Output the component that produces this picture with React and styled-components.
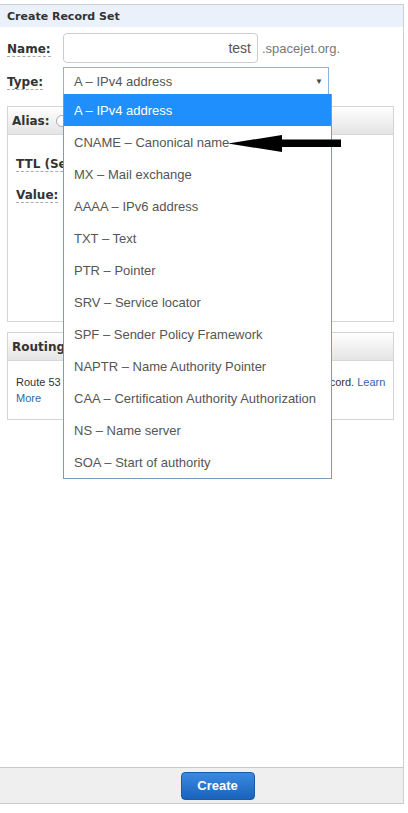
import React from "react";
import styled, { createGlobalStyle } from "styled-components";

const Global = createGlobalStyle`
  html, body { margin: 0; padding: 0; background: #fff; }
  body { font-family: "Liberation Sans", Arial, sans-serif; }
`;

const Page = styled.div`
  position: relative;
  width: 404px;
  height: 813px;
  padding-top: 4px;
  box-sizing: border-box;
`;

const Frame = styled.div`
  height: 800px;
  border-top: 1px solid #cfcfcf;
  border-right: 1px solid #cfcfcf;
  display: flex;
  flex-direction: column;
  box-sizing: border-box;
`;

const Header = styled.div`
  height: 22px;
  background: #eaf1fb;
  display: flex;
  align-items: center;
  padding-left: 7px;
  font-family: "DejaVu Sans", Verdana, sans-serif;
  font-weight: bold;
  font-size: 11px;
  color: #333;
`;

const Form = styled.div`
  padding: 0 9px 0 7px;
  display: flex;
  flex-direction: column;
`;

const Row = styled.div`
  display: flex;
  align-items: center;
  margin-top: ${(p) => p.$mt}px;
`;

const Label = styled.div`
  width: 56px;
  flex: none;
`;

const LabelText = styled.span`
  font-family: "DejaVu Sans", Verdana, sans-serif;
  font-weight: bold;
  font-size: 12px;
  color: #333;
  border-bottom: 1px dashed #aaa;
  white-space: nowrap;
`;

const TextInput = styled.div`
  width: 195px;
  height: 30px;
  box-sizing: border-box;
  border: 1px solid #ccc;
  border-radius: 4px;
  display: flex;
  align-items: center;
  justify-content: flex-end;
  padding-right: 6px;
  font-size: 14px;
  color: #555;
`;

const Suffix = styled.span`
  margin-left: 4px;
  font-size: 13px;
  color: #777;
`;

const Select = styled.div`
  width: 266px;
  height: 27px;
  box-sizing: border-box;
  border: 1px solid #86b3e6;
  border-bottom: none;
  display: flex;
  align-items: center;
  justify-content: space-between;
  padding: 0 5px 0 10px;
  font-size: 13px;
  color: #555;
`;

const Caret = styled.span`
  font-size: 8px;
  color: #444;
`;

const Panel = styled.div`
  border: 1px solid #d4d4d4;
  height: ${(p) => p.$h}px;
  box-sizing: border-box;
  margin-top: ${(p) => p.$mt}px;
  display: flex;
  flex-direction: column;
`;

const PanelHead = styled.div`
  height: 27px;
  flex: none;
  background: linear-gradient(#ffffff, #e4e4e4);
  border-bottom: 1px solid #d8d8d8;
  display: flex;
  align-items: center;
  padding-left: 4px;
  gap: 6px;
  font-family: "DejaVu Sans", Verdana, sans-serif;
  font-weight: bold;
  font-size: 12px;
  color: #333;
`;

const Radio = styled.span`
  width: 10px;
  height: 10px;
  border-radius: 50%;
  border: 1px solid #aaa;
  background: #fff;
`;

const PanelBody = styled.div`
  padding: 14px 8px 0 8px;
  display: flex;
  flex-direction: column;
`;

const FieldRow = styled.div`
  display: flex;
  align-items: ${(p) => p.$align || "center"};
  height: ${(p) => p.$h}px;
`;

const FieldLabel = styled.div`
  width: 94px;
  flex: none;
  padding-top: ${(p) => p.$pt || 0}px;
`;

const SmallInput = styled.div`
  width: 120px;
  height: 24px;
  border: 1px solid #ccc;
  border-radius: 4px;
  box-sizing: border-box;
`;

const TextArea = styled.div`
  width: 222px;
  height: 57px;
  border: 1px solid #ccc;
  border-radius: 4px;
  box-sizing: border-box;
`;

const Note = styled.p`
  margin: 0;
  padding: 13px 0 0 8px;
  font-size: 11px;
  line-height: 16px;
  color: #333;
`;

const Link = styled.a`
  color: #2f66ad;
  text-decoration: none;
`;

const Spacer = styled.div`
  flex: 1;
`;

const Footer = styled.div`
  height: 37px;
  box-sizing: border-box;
  background: #efefef;
  border-top: 1px solid #c9c9c9;
  border-bottom: 1px solid #c9c9c9;
  display: flex;
  justify-content: center;
  align-items: center;
  padding-left: 32px;
`;

const Button = styled.button`
  width: 74px;
  height: 28px;
  border: 1px solid #1b5aa6;
  border-radius: 4px;
  background: linear-gradient(#3a8ae0, #1a63bd);
  color: #fff;
  font-family: "Liberation Sans", Arial, sans-serif;
  font-weight: bold;
  font-size: 13px;
  padding: 0;
`;

const Menu = styled.ul`
  position: absolute;
  left: 63px;
  top: 94px;
  width: 267px;
  margin: 0;
  padding: 0;
  list-style: none;
  border: 1px solid #7c9cbd;
  border-top: none;
  background: #fff;
  box-sizing: content-box;
`;

const Item = styled.li`
  height: 32px;
  display: flex;
  align-items: center;
  padding-left: 10px;
  padding-top: 1px;
  box-sizing: border-box;
  font-size: 13px;
  color: ${(p) => (p.$active ? "#fff" : "#555")};
  background: ${(p) => (p.$active ? "#1e8ffd" : "#fff")};
`;

const Arrow = styled.svg`
  position: absolute;
  left: 228px;
  top: 134px;
`;

const options = [
  "A – IPv4 address",
  "CNAME – Canonical name",
  "MX – Mail exchange",
  "AAAA – IPv6 address",
  "TXT – Text",
  "PTR – Pointer",
  "SRV – Service locator",
  "SPF – Sender Policy Framework",
  "NAPTR – Name Authority Pointer",
  "CAA – Certification Authority Authorization",
  "NS – Name server",
  "SOA – Start of authority",
];

export default function App() {
  return (
    <>
      <Global />
      <Page>
        <Frame>
          <Header>Create Record Set</Header>
          <Form>
            <Row $mt={6}>
              <Label>
                <LabelText>Name:</LabelText>
              </Label>
              <TextInput>test</TextInput>
              <Suffix>.spacejet.org.</Suffix>
            </Row>
            <Row $mt={4}>
              <Label>
                <LabelText>Type:</LabelText>
              </Label>
              <Select>
                <span>A – IPv4 address</span>
                <Caret>▼</Caret>
              </Select>
            </Row>
            <Panel $h={216} $mt={12}>
              <PanelHead>
                <span>Alias:</span>
                <Radio />
              </PanelHead>
              <PanelBody>
                <FieldRow $h={28}>
                  <FieldLabel>
                    <LabelText>TTL (Seconds):</LabelText>
                  </FieldLabel>
                  <SmallInput />
                </FieldRow>
                <FieldRow $h={60} $align="flex-start">
                  <FieldLabel $pt={8}>
                    <LabelText>Value:</LabelText>
                  </FieldLabel>
                  <TextArea />
                </FieldRow>
              </PanelBody>
            </Panel>
            <Panel $h={88} $mt={10}>
              <PanelHead>
                <span>Routing Policy:</span>
              </PanelHead>
              <Note>
                Route 53 responds to queries based only on the values in this record.{" "}
                <Link href="#">Learn More</Link>
              </Note>
            </Panel>
          </Form>
          <Spacer />
          <Footer>
            <Button>Create</Button>
          </Footer>
        </Frame>
        <Menu>
          {options.map((o, i) => (
            <Item key={o} $active={i === 0}>
              {o}
            </Item>
          ))}
        </Menu>
        <Arrow width="114" height="20" viewBox="0 0 114 20">
          <polygon points="0,9.5 54,1 54,5.5 113,5.5 113,13 54,13 54,18" fill="#000" />
        </Arrow>
      </Page>
    </>
  );
}
